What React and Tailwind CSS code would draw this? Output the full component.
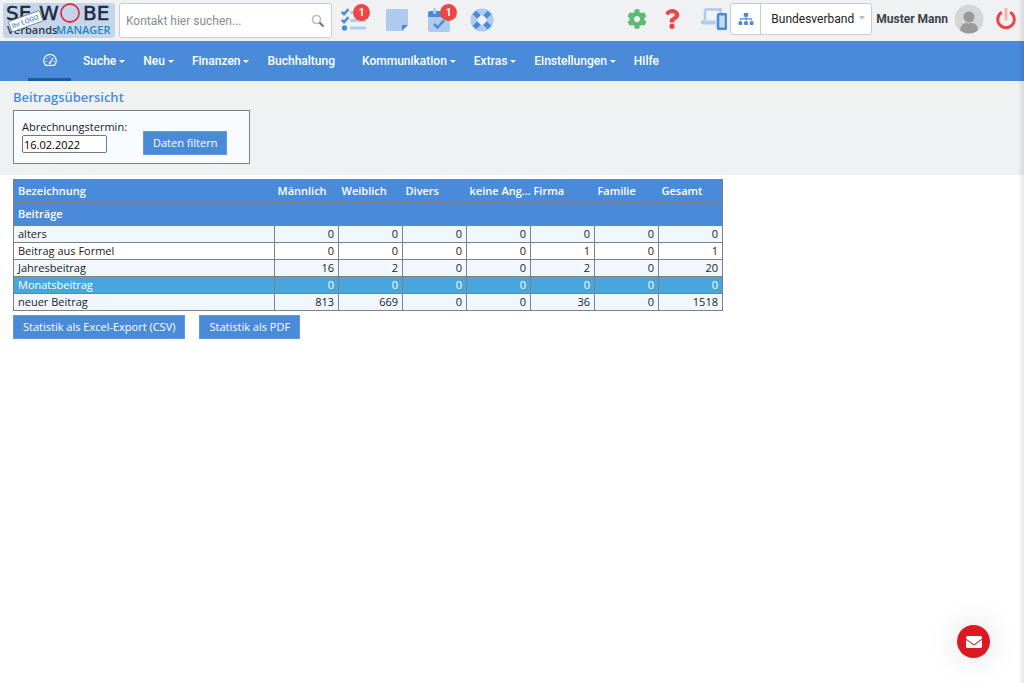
import React from 'react';
import { FaCog, FaQuestion, FaSitemap, FaEnvelope } from 'react-icons/fa';

const NAV = [
    { label: 'Suche', caret: true },
    { label: 'Neu', caret: true },
    { label: 'Finanzen', caret: true },
    { label: 'Buchhaltung', caret: false },
    { label: 'Kommunikation', caret: true },
    { label: 'Extras', caret: true },
    { label: 'Einstellungen', caret: true },
    { label: 'Hilfe', caret: false },
];

const COLUMNS = ['Männlich', 'Weiblich', 'Divers', 'keine Ang...', 'Firma', 'Familie', 'Gesamt'];

const ROWS = [
    { name: 'alters', values: [0, 0, 0, 0, 0, 0, 0] },
    { name: 'Beitrag aus Formel', values: [0, 0, 0, 0, 1, 0, 1] },
    { name: 'Jahresbeitrag', values: [16, 2, 0, 0, 2, 0, 20] },
    { name: 'Monatsbeitrag', values: [0, 0, 0, 0, 0, 0, 0], active: true },
    { name: 'neuer Beitrag', values: [813, 669, 0, 0, 36, 0, 1518] },
];

function Logo() {
    return (
        <svg viewBox="0 0 112 35" className="w-28 h-[35px] shrink-0" role="img" aria-label="SEWOBE VerbandsMANAGER">
            <rect width="112" height="35" rx="3" fill="#c5d6ec" />
            <g fontFamily="DejaVu Sans, sans-serif" fontSize="20" fill="#1f2a3c" stroke="#1f2a3c" strokeWidth="0.5">
                <text x="3" y="17">SE</text>
                <text x="36" y="17">W</text>
                <text x="80" y="17">BE</text>
            </g>
            <circle cx="67" cy="10" r="9" fill="none" stroke="#e0323c" strokeWidth="1.8" />
            <g fontFamily="Open Sans, sans-serif" fontSize="11" fontWeight="600">
                <text x="4" y="31" fill="#2c3646">Verbands</text>
                <text x="53" y="31" fill="#2389b5">MANAGER</text>
            </g>
            <g transform="rotate(-20 22 18)">
                <rect x="6" y="13" width="33" height="11" rx="1" fill="#fff" stroke="#777" strokeWidth="0.8" />
                <text x="8" y="21" fontFamily="Roboto, sans-serif" fontSize="7" fontWeight="500" fill="#4a8bd9">Ihr LOGO</text>
            </g>
        </svg>
    );
}

function TasksIcon() {
    return (
        <svg viewBox="0 0 25 24" className="w-[25px] h-6">
            <g fill="#aecbee">
                <rect x="9" y="3" width="16" height="3" rx="1" />
                <rect x="9" y="11" width="16" height="3" rx="1" />
                <rect x="9" y="18.500" width="16" height="3" rx="1" />
            </g>
            <path d="M.800 4l2.200 2.200 4.500-5M.800 12L3 14.200l4.500-5" fill="none" stroke="#4a8bd9" strokeWidth="2.600" />
            <circle cx="3.500" cy="20" r="2.700" fill="#4a8bd9" />
        </svg>
    );
}

function NoteIcon() {
    return (
        <svg viewBox="0 0 22 24" className="w-[22px] h-6">
            <path d="M1 1h20a1 1 0 0 1 1 1v15h-5a1 1 0 0 0-1 1v5H1a1 1 0 0 1-1-1V2a1 1 0 0 1 1-1z" fill="#aecbee" />
            <path d="M16 17h6l-6 6z" fill="#4a8bd9" />
        </svg>
    );
}

function CalendarIcon() {
    return (
        <svg viewBox="0 0 22 24" className="w-[22px] h-6">
            <path d="M0 9h22v13a2 2 0 0 1-2 2H2a2 2 0 0 1-2-2z" fill="#aecbee" />
            <path d="M2 3h18a2 2 0 0 1 2 2v4H0V5a2 2 0 0 1 2-2z" fill="#4a8bd9" />
            <rect x="5" y="0" width="3" height="6" rx="1" fill="#aecbee" />
            <rect x="14" y="0" width="3" height="6" rx="1" fill="#aecbee" />
            <path d="M6 16l3.500 3.500L16 12.500" fill="none" stroke="#4a8bd9" strokeWidth="2.500" />
        </svg>
    );
}

function LifeRingIcon() {
    return (
        <svg viewBox="0 0 24 24" className="size-6">
            <circle cx="12" cy="12" r="8.200" fill="none" stroke="#aecbee" strokeWidth="6.800" />
            <path d="M4.500 4.500l4.500 4.500M19.500 4.500L15 9M4.500 19.500L9 15M19.500 19.500L15 15" stroke="#4a8bd9" strokeWidth="5" />
        </svg>
    );
}

function DevicesIcon() {
    return (
        <svg viewBox="0 0 26 22" className="w-[26px] h-[22px]">
            <path d="M4 12V2.500a1 1 0 0 1 1-1h14.500V5" fill="none" stroke="#aecbee" strokeWidth="2.600" />
            <path d="M0 12.500h14.500v4H2.500A2.500 2.500 0 0 1 0 14z" fill="#aecbee" />
            <rect x="17" y="6.200" width="8" height="14.600" rx="1" fill="#c5daf3" stroke="#4a8bd9" strokeWidth="2.600" />
        </svg>
    );
}

function DashboardIcon() {
    return (
        <svg viewBox="0 0 14 12" className="w-3.5 h-3" fill="none" stroke="#fff">
            <path d="M2.600 11.300A6.300 6.300 0 1 1 11.400 11.300z" strokeWidth="1.200" strokeLinejoin="round" />
            <path d="M7 8.500l3-4" strokeWidth="1.200" strokeLinecap="round" />
            <circle cx="6.800" cy="8.800" r="1.100" fill="#fff" stroke="none" />
            <path d="M2.600 7.500h1.200M3.800 4.200l.8.800M7 2.600v1M10.200 7.500h1.200" strokeWidth="1" />
        </svg>
    );
}

function PowerIcon() {
    return (
        <svg viewBox="0 0 20 22" className="w-5 h-[22px]" fill="none">
            <path d="M5.800 4.200a8.300 8.300 0 1 0 8.400 0" stroke="#ee4545" strokeWidth="3" />
            <path d="M10 1v10" stroke="#f6b0b0" strokeWidth="3" strokeLinecap="round" />
        </svg>
    );
}

function Avatar() {
    return (
        <svg viewBox="0 0 30 30" className="size-[30px]">
            <clipPath id="avatar-clip">
                <circle cx="15" cy="15" r="14.500" />
            </clipPath>
            <circle cx="15" cy="15" r="14.500" fill="#d5d5d5" />
            <g clipPath="url(#avatar-clip)" fill="#999">
                <path d="M6 30v-3c0-5 3-8 6-8h6c3 0 6 3 6 8v3z" />
                <circle cx="15" cy="13" r="6.500" fill="#d5d5d5" />
                <circle cx="15" cy="13" r="5.500" />
            </g>
        </svg>
    );
}

function Badge({ children }) {
    return (
        <span className="absolute -top-1 left-3 flex size-[17px] items-center justify-center rounded-full bg-[#ee4545] text-[10px] font-bold text-white">
            {children}
        </span>
    );
}

function Header() {
    return (
        <header className="flex h-[41px] items-start bg-[#f0f1f3] pt-[3px] pr-2 pl-[3px]">
            <Logo />
            <label className="ml-1 flex h-[35px] w-[213px] items-center rounded-[3px] border border-[#c8ccd3] bg-white px-1.5">
                <input
                    type="text"
                    aria-label="Kontakt suchen"
                    placeholder="Kontakt hier suchen..."
                    className="min-w-0 flex-1 text-[12px] outline-none placeholder:text-[#888c95]"
                />
                <svg viewBox="0 0 14 14" className="size-3.5" fill="none">
                    <circle cx="5.500" cy="5.500" r="4" stroke="#b9bbc0" strokeWidth="1.600" />
                    <path d="M8.500 8.500l4 4" stroke="#77797e" strokeWidth="2.200" />
                </svg>
            </label>
            <div className="ml-[9px] flex h-[33px] items-center gap-5">
                <button aria-label="Aufgaben" className="relative"><TasksIcon /><Badge>1</Badge></button>
                <button aria-label="Notizen"><NoteIcon /></button>
                <button aria-label="Termine" className="relative"><CalendarIcon /><Badge>1</Badge></button>
                <button aria-label="Support"><LifeRingIcon /></button>
            </div>
            <div className="ml-auto flex h-8 items-center">
                <button aria-label="Einstellungen" className="mr-4 text-[#5dba72]"><FaCog className="size-5" /></button>
                <button aria-label="Hilfe" className="mr-5 text-[#ee4545]"><FaQuestion className="h-5 w-[18px]" /></button>
                <button aria-label="Geräte" className="mr-[3px]"><DevicesIcon /></button>
                <div className="flex h-8 w-[142px] rounded-[3px] border border-[#c8ccd3] bg-white">
                    <button aria-label="Struktur" className="flex w-[30px] items-center justify-center border-r border-[#c8ccd3] text-[#4a8bd9]">
                        <FaSitemap className="h-3 w-4" />
                    </button>
                    <div className="relative flex flex-1">
                        <select aria-label="Verband" className="w-full appearance-none pl-2.5 text-[12px] text-[#222] outline-none">
                            <option>Bundesverband</option>
                        </select>
                        <span className="pointer-events-none absolute top-3 right-1.5 border-x-[3px] border-t-4 border-x-transparent border-t-[#b9bdc6]" />
                    </div>
                </div>
                <span className="ml-1 text-[12px] font-bold text-[#3d4148]">Muster Mann</span>
                <span className="ml-1.5"><Avatar /></span>
                <button aria-label="Abmelden" className="ml-3"><PowerIcon /></button>
            </div>
        </header>
    );
}

function Nav() {
    return (
        <nav className="flex h-10 bg-[#4a8bd9] pl-7 text-[12px] font-medium text-white">
            <a href="#dashboard" aria-label="Dashboard" className="flex w-[43px] items-center justify-center border-b-[3px] border-[#215a9e]">
                <DashboardIcon />
            </a>
            <ul className="ml-[3px] flex items-center">
                {NAV.map((item) => (
                    <li key={item.label}>
                        <a href="#menu" className="flex items-center gap-[3px] px-[9px]">
                            {item.label}
                            <span className={item.caret ? 'border-x-[3px] border-t-[3px] border-x-transparent border-t-white' : 'w-1.5'} />
                        </a>
                    </li>
                ))}
            </ul>
        </nav>
    );
}

function ActionButton({ children }) {
    return (
        <button className="h-6 border border-[#5f9ae0] bg-[#4a8bd9] px-[9px] text-[11px] font-medium text-white">
            {children}
        </button>
    );
}

function StatsTable() {
    return (
        <table className="w-[710px] table-fixed border-collapse border border-[#808080] text-[11px] leading-4 text-[#222]">
            <colgroup>
                <col />
                {COLUMNS.map((col) => <col key={col} className="w-16" />)}
            </colgroup>
            <thead className="bg-[#4a8bd9] text-left text-white">
                <tr className="h-[23px]">
                    <th className="border-b border-[#808080] px-1 font-semibold">Bezeichnung</th>
                    {COLUMNS.map((col) => (
                        <th key={col} className="border-b border-[#808080] pl-[3px] font-semibold whitespace-nowrap">{col}</th>
                    ))}
                </tr>
                <tr className="h-[23px]">
                    <th colSpan={8} className="px-1 font-semibold">Beiträge</th>
                </tr>
            </thead>
            <tbody>
                {ROWS.map((row) => (
                    <tr key={row.name} className={row.active ? 'bg-[#48a6dd] font-medium text-white' : 'odd:bg-[#f0f7ff] even:bg-white'}>
                        <td className="border border-[#808080] px-1">{row.name}</td>
                        {row.values.map((value, i) => (
                            <td key={COLUMNS[i]} className="border border-[#808080] px-1 text-right">{value}</td>
                        ))}
                    </tr>
                ))}
            </tbody>
        </table>
    );
}

export default function App() {
    return (
        <div className="relative min-h-screen bg-white font-['Roboto',sans-serif]">
            <Header />
            <Nav />
            <main className="font-['Open_Sans',sans-serif]">
                <section className="bg-[#f0f1f3] px-[13px] pt-[7px] pb-[11px]">
                    <h1 className="mb-1 text-[13px] leading-[18px] font-semibold text-[#4a8bd9]">Beitragsübersicht</h1>
                    <form className="flex h-[54px] w-[237px] items-start gap-9 border border-[#808080] bg-[#f8fcff] pt-2 pl-2">
                        <div>
                            <label htmlFor="termin" className="block w-[85px] text-[11px] leading-4 whitespace-nowrap text-[#222]">Abrechnungstermin:</label>
                            <input
                                id="termin"
                                type="text"
                                defaultValue="16.02.2022"
                                className="block h-[18px] w-[85px] rounded-[2px] border border-[#767676] bg-white px-px text-[11px] text-black"
                            />
                        </div>
                        <div className="pt-2.5">
                            <ActionButton>Daten filtern</ActionButton>
                        </div>
                    </form>
                </section>
                <section className="px-[13px] pt-1">
                    <StatsTable />
                    <div className="mt-1 flex gap-3.5">
                        <ActionButton>Statistik als Excel-Export (CSV)</ActionButton>
                        <ActionButton>Statistik als PDF</ActionButton>
                    </div>
                </section>
            </main>
            <button
                aria-label="Nachricht senden"
                className="fixed right-[34px] bottom-[25px] flex size-[33px] items-center justify-center rounded-full bg-[#dc1820] text-white shadow-[0_0_32px_rgba(0,0,0,0.15)]"
            >
                <FaEnvelope className="size-4" />
            </button>
            <div className="pointer-events-none absolute inset-y-0 right-0 w-1.5 bg-linear-to-r from-transparent to-black/10" />
        </div>
    );
}
